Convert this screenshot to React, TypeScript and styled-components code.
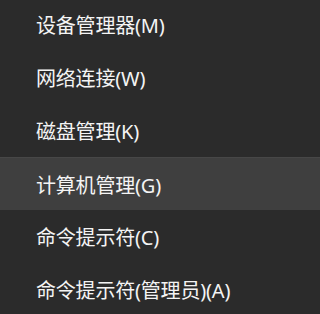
import React from "react";
import styled, { createGlobalStyle } from "styled-components";

const Global = createGlobalStyle`
  html, body {
    margin: 0;
    padding: 0;
    background: #2b2b2b;
    overflow: hidden;
  }
`;

const Menu = styled.ul`
  list-style: none;
  margin: -2px 0 0 0;
  padding: 0;
  width: 100%;
  height: 316px;
  background: #2b2b2b;
  display: flex;
  flex-direction: column;
`;

const Item = styled.li<{ $active?: boolean }>`
  height: 53px;
  flex: none;
  display: flex;
  align-items: center;
  padding-left: 36px;
  box-sizing: border-box;
  background: ${(p) => (p.$active ? "#3f3f3f" : "transparent")};
  border-top: ${(p) => (p.$active ? "1px solid #474747" : "none")};
  color: #f4f4f4;
  font-family: "Noto Sans", "Noto Sans CJK SC", sans-serif;
  font-size: 20px;
  letter-spacing: -0.2px;
  white-space: nowrap;
`;

const items = [
  "设备管理器(M)",
  "网络连接(W)",
  "磁盘管理(K)",
  "计算机管理(G)",
  "命令提示符(C)",
  "命令提示符(管理员)(A)",
];

export default function App() {
  return (
    <>
      <Global />
      <Menu>
        {items.map((t, i) => (
          <Item key={t} $active={i === 3}>
            {t}
          </Item>
        ))}
      </Menu>
    </>
  );
}
